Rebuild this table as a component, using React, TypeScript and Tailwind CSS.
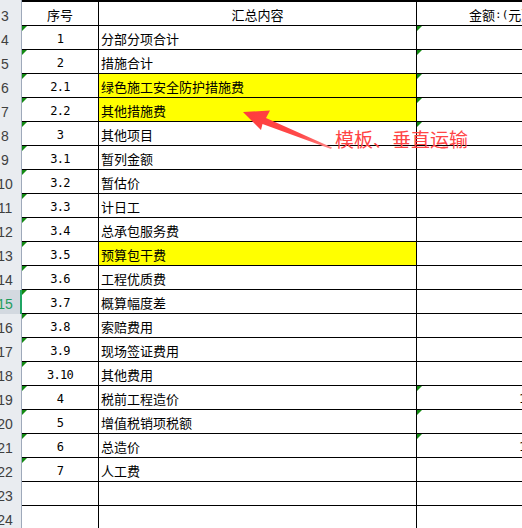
import React from "react";

type Row = {
  n: number;
  a?: string;
  b?: string;
  yellow?: boolean;
  tri?: boolean;
  cTri?: boolean;
  frag?: boolean;
  selected?: boolean;
};

const rows: Row[] = [
  { n: 4, a: "1", b: "分部分项合计", tri: true, cTri: true },
  { n: 5, a: "2", b: "措施合计", tri: true, cTri: true },
  { n: 6, a: "2.1", b: "绿色施工安全防护措施费", yellow: true, tri: true, cTri: true },
  { n: 7, a: "2.2", b: "其他措施费", yellow: true, tri: true, cTri: true },
  { n: 8, a: "3", b: "其他项目", tri: true, cTri: true },
  { n: 9, a: "3.1", b: "暂列金额", tri: true },
  { n: 10, a: "3.2", b: "暂估价", tri: true },
  { n: 11, a: "3.3", b: "计日工", tri: true },
  { n: 12, a: "3.4", b: "总承包服务费", tri: true },
  { n: 13, a: "3.5", b: "预算包干费", yellow: true, tri: true },
  { n: 14, a: "3.6", b: "工程优质费", tri: true },
  { n: 15, a: "3.7", b: "概算幅度差", tri: true, selected: true },
  { n: 16, a: "3.8", b: "索赔费用", tri: true },
  { n: 17, a: "3.9", b: "现场签证费用", tri: true },
  { n: 18, a: "3.10", b: "其他费用", tri: true },
  { n: 19, a: "4", b: "税前工程造价", tri: true, cTri: true, frag: true },
  { n: 20, a: "5", b: "增值税销项税额", tri: true, cTri: true },
  { n: 21, a: "6", b: "总造价", tri: true, cTri: true, frag: true },
  { n: 22, a: "7", b: "人工费", tri: true },
  { n: 23 },
  { n: 24 },
];

const cjk = "font-['Noto_Sans_CJK_SC',sans-serif]";
const mono = "font-['DejaVu_Sans_Mono',monospace]";

function Tri() {
  return (
    <span className="absolute left-0 top-0 w-0 h-0 border-t-[5px] border-t-[#138a13] border-r-[5px] border-r-transparent" />
  );
}

function RowHead({ n, selected }: { n: number; selected?: boolean }) {
  return (
    <div
      className={
        "w-[22px] shrink-0 overflow-hidden flex items-end pb-[2px] " +
        (selected
          ? "bg-[#d3d9e0] border-r-2 border-r-[#1fa463]"
          : "bg-[#e9ecf0] border-r border-r-[#9ea9ba]")
      }
    >
      <span
        className={
          "ml-[-12px] w-[34px] shrink-0 text-center text-[14px] leading-[16px] font-['Liberation_Sans',sans-serif] " +
          (selected ? "text-[#1f9d5c]" : "text-[#3f3f3f]")
        }
      >
        {n}
      </span>
    </div>
  );
}

export default function App() {
  return (
    <div className="relative w-[522px] h-[528px] overflow-hidden bg-white">
      {/* header row */}
      <div className="flex h-[26px]">
        <RowHead n={3} />
        <div className="flex flex-1 border-t-2 border-b border-black">
          <div className={`w-[77px] shrink-0 border-r border-black flex items-end justify-center pb-[2px] text-[13px] leading-[16px] text-black ${cjk}`}>
            序号
          </div>
          <div className={`w-[318px] shrink-0 border-r border-black flex items-end justify-center pb-[2px] text-[13px] leading-[16px] text-black ${cjk}`}>
            汇总内容
          </div>
          <div className={`flex-1 flex items-end pb-[2px] pl-[52px] whitespace-nowrap text-[13px] leading-[16px] text-black ${cjk}`}>
            金额<span className={`${mono} text-[11px]`}>:(</span>元)
          </div>
        </div>
      </div>

      {rows.map((r) => (
        <div key={r.n} className="flex h-[24px]">
          <RowHead n={r.n} selected={r.selected} />
          <div className="flex flex-1 border-b border-black">
            <div className="relative w-[77px] shrink-0 border-r border-black flex items-end justify-center pb-[3px]">
              {r.tri && <Tri />}
              <span className={`${mono} text-[12px] leading-[14px] tracking-[-0.7px] text-black`}>{r.a}</span>
            </div>
            <div
              className={
                `w-[318px] shrink-0 border-r border-black flex items-end pb-[2px] pl-[2px] text-[13px] leading-[16px] text-black ${cjk} ` +
                (r.yellow ? "bg-[#ffff00]" : "")
              }
            >
              {r.b}
            </div>
            <div className="relative flex-1 flex items-end pb-[3px] whitespace-nowrap">
              {r.cTri && <Tri />}
              {r.frag && (
                <span className={`ml-[102px] ${mono} text-[12px] leading-[14px] text-black`}>1</span>
              )}
            </div>
          </div>
        </div>
      ))}

      {/* annotation overlay */}
      <svg className="absolute left-0 top-0 pointer-events-none" width="522" height="528">
        <defs>
          <linearGradient id="arr" x1="332" y1="148" x2="243" y2="112" gradientUnits="userSpaceOnUse">
            <stop offset="0" stopColor="#ff8a8a" />
            <stop offset="0.35" stopColor="#ff4a4a" />
            <stop offset="1" stopColor="#ff3c3c" />
          </linearGradient>
        </defs>
        <polygon
          points="243,112 270,110.5 266,118 332,147.5 331,149 262.5,124 261,130"
          fill="url(#arr)"
        />
      </svg>
      <div className={`absolute left-[335px] top-[129px] text-[19px] leading-[20px] text-[#ff4545] whitespace-nowrap ${cjk}`}>
        模板、垂直运输
      </div>
    </div>
  );
}
